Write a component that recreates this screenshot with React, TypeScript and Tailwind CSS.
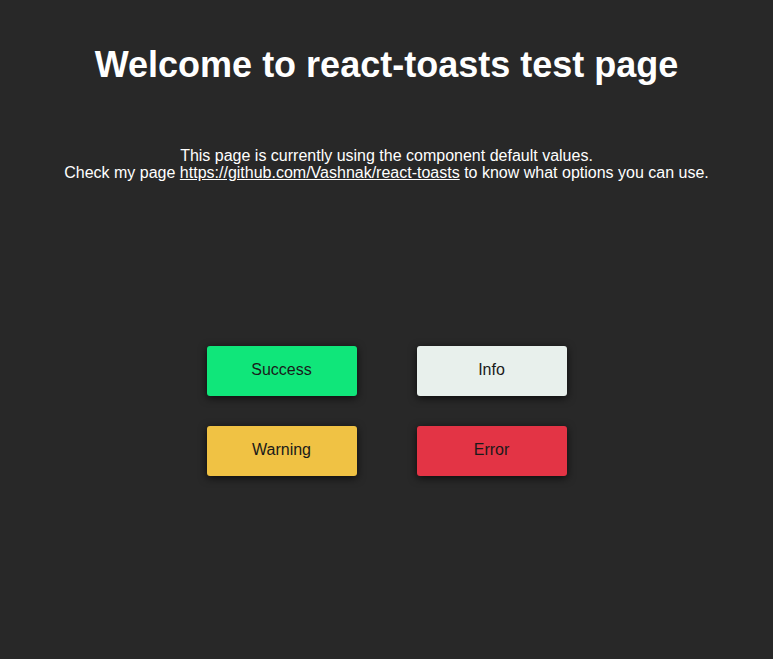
import React from "react";

const buttons = [
  { label: "Success", className: "bg-[#10e67a]" },
  { label: "Info", className: "bg-[#e8f0ec]" },
  { label: "Warning", className: "bg-[#f0c244]" },
  { label: "Error", className: "bg-[#e33445]" },
];

const App: React.FC = () => {
  return (
    <div className="min-h-screen bg-[#282828] text-white font-['Liberation_Sans',Arial,sans-serif] flex flex-col items-center">
      <h1 className="mt-[44px] text-[36px] leading-[41px] font-bold text-center">
        Welcome to react-toasts test page
      </h1>

      <p className="mt-[62px] text-[16px] leading-[17px] text-center">
        This page is currently using the component default values.
        <br />
        Check my page{" "}
        <a href="#" className="underline">
          https://github.com/Vashnak/react-toasts
        </a>{" "}
        to know what options you can use.
      </p>

      <div className="mt-[165px] grid grid-cols-2 gap-x-[60px] gap-y-[30px]">
        {buttons.map((b) => (
          <button
            key={b.label}
            className={`w-[150px] h-[50px] pb-[2px] rounded-[3px] text-[16px] text-[#1a1a1a] shadow-[0_2px_8px_rgba(0,0,0,0.7)] ${b.className}`}
          >
            {b.label}
          </button>
        ))}
      </div>
    </div>
  );
};

export default App;
